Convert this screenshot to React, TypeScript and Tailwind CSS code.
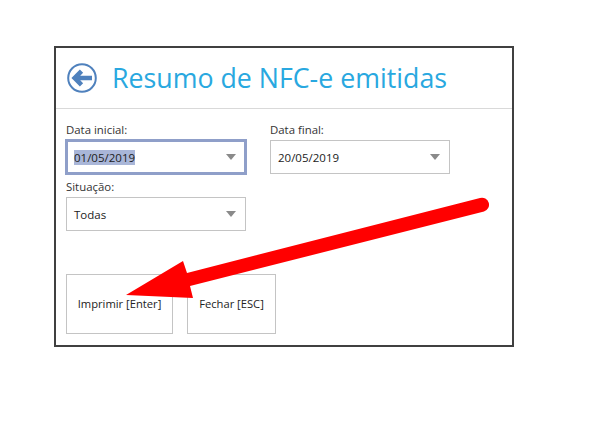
const Combo = ({ value, focused = false }: { value: string; focused?: boolean }) => (
    <div
        className={`flex items-center justify-between bg-white ${
            focused ? "-mx-px -my-px h-[36px] w-[182px] border-[3px] border-[#8f9fc9] pl-[6px] pr-[8px]" : "h-[34px] w-[180px] border border-[#c4c4c4] pl-[7px] pr-[9px]"
        }`}
    >
        <span className={`text-[11.5px] leading-[15px] text-[#222] ${focused ? "bg-[#a9b6d8]" : ""}`}>{value}</span>
        <span className="h-0 w-0 border-x-[5.5px] border-t-[6px] border-x-transparent border-t-[#8a8a8a]" />
    </div>
);

const Field = ({ label, children }: { label: string; children: React.ReactNode }) => (
    <div className="flex flex-col">
        <span className="mb-[2px] h-[16px] text-[11.4px] leading-[16px] text-[#333]">{label}</span>
        {children}
    </div>
);

const App = () => {
    return (
        <div className="relative h-[433px] w-[610px] overflow-hidden bg-white font-['Open_Sans',sans-serif]">
            <div className="ml-[54px] pt-[46px]">
                <div className="flex h-[301px] w-[460px] flex-col border-2 border-[#404040]">
                    {/* Header */}
                    <div className="flex h-[61px] shrink-0 items-center gap-[15px] border-b border-[#d9d9d9] pl-[11px]">
                        <svg width="30" height="30" viewBox="0 0 30 30" fill="none">
                            <circle cx="15" cy="15" r="13.8" stroke="#4f81bd" strokeWidth="2" />
                            <path d="M25 15 H8 M14.5 8.2 L7.7 15 L14.5 21.8" stroke="#4f81bd" strokeWidth="4.6" />
                        </svg>
                        <h1 className="text-[26.75px] leading-[36px] text-[#29a8e0]">Resumo de NFC-e emitidas</h1>
                    </div>

                    {/* Filtros */}
                    <div className="flex flex-col pl-[10px] pt-[13px]">
                        <div className="flex gap-[24px]">
                            <Field label="Data inicial:">
                                <Combo value="01/05/2019" focused />
                            </Field>
                            <Field label="Data final:">
                                <Combo value="20/05/2019" />
                            </Field>
                        </div>
                        <div className="mt-[5px]">
                            <Field label="Situação:">
                                <Combo value="Todas" />
                            </Field>
                        </div>
                        <div className="mt-[43px] flex gap-[14px]">
                            <button className="h-[60px] w-[107px] border border-[#c4c4c4] text-[11.2px] text-[#222]">Imprimir [Enter]</button>
                            <button className="h-[60px] w-[89px] border border-[#c4c4c4] text-[11.2px] text-[#222]">Fechar [ESC]</button>
                        </div>
                    </div>
                </div>
            </div>

            {/* Seta vermelha por cima da tela */}
            <svg className="absolute left-0 top-0" width="610" height="433" viewBox="0 0 610 433" fill="none">
                <path d="M126 295 L183 261 L187 273 L480 198 A6.8 6.8 0 0 1 484 211.5 L190 286 L193 298 Z" fill="#ff0000" />
            </svg>
        </div>
    );
};

export default App;
